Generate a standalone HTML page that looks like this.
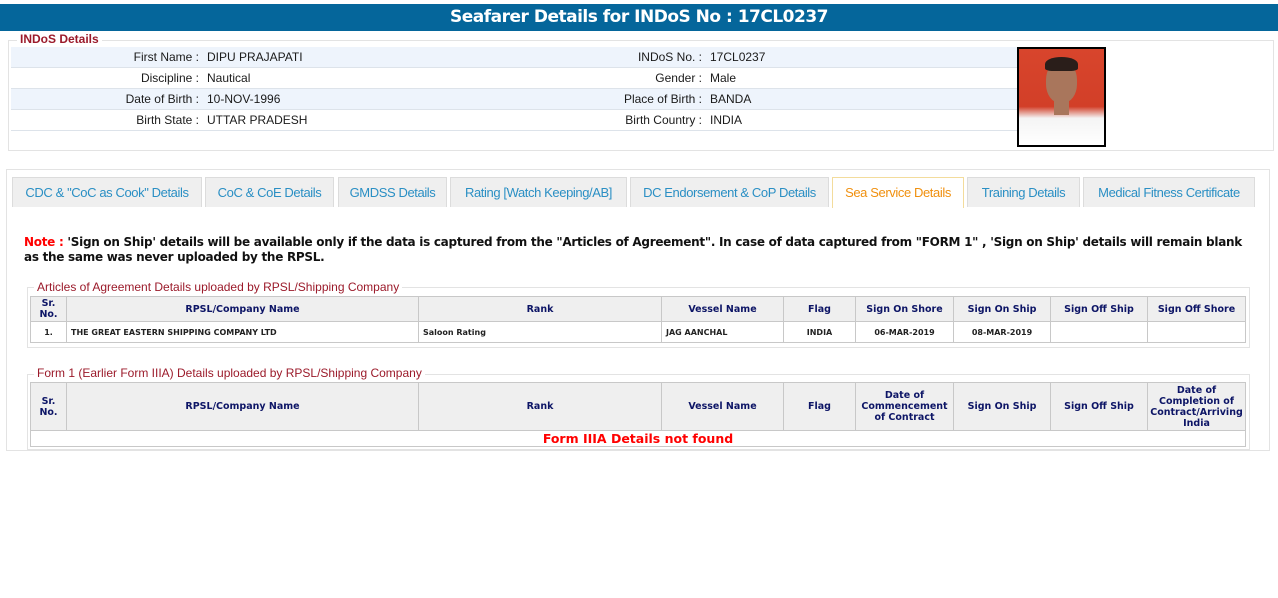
<!DOCTYPE html>
<html><head><meta charset="utf-8"><style>
*{box-sizing:border-box;margin:0;padding:0}
body{width:1278px;height:598px;background:#fff;font-family:"Liberation Sans",Arial,sans-serif;position:relative;overflow:hidden}
.abs{position:absolute}
.hdr{left:0;top:4px;width:1278px;height:27px;background:#05669b;color:#fff;font:bold 17px "DejaVu Sans",Verdana,sans-serif;letter-spacing:-0.5px;text-align:center;line-height:27px}
.fs{border:1px solid #e3e3e3}
.leg{background:#fff;color:#9b1a2a;font-size:12px;padding:0 3px;line-height:13px}
.row{left:11px;width:1006px;height:21px;border-bottom:1px solid #dde3ea;font-size:12px;line-height:20px;color:#1a1a1a}
.row.s{background:#eef4fc}
.row span{position:absolute}
.l1{right:818px;text-align:right}
.v1{left:196px}
.l2{right:315px;text-align:right}
.v2{left:699px}
.tab{top:177px;height:30px;background:#efefef;border:1px solid #dcdcdc;border-bottom:none;color:#2a8fc4;font-size:13px;letter-spacing:-0.4px;text-align:center;line-height:30px}
.tab.a{background:#fff;border-color:#f3dc9c;color:#f0900f;height:31px}
table{border-collapse:collapse;position:absolute;font-family:"DejaVu Sans",Verdana,sans-serif}
td,th{border:1px solid #c8c8c8;text-align:center}
th{background:#efefef;color:#0d1566;font-size:9.5px;font-weight:bold;line-height:11px}
td{font-size:8px;font-weight:bold;color:#222}
</style></head><body>
<div class="abs hdr">Seafarer Details for INDoS No : 17CL0237</div>
<div class="abs fs" style="left:8px;top:40px;width:1266px;height:111px"></div>
<div class="abs leg" style="left:17px;top:33px;font-weight:bold;font-size:12px">INDoS Details</div>
<div class="abs row s" style="top:47px"><span class="l1">First Name :</span><span class="v1">DIPU PRAJAPATI</span><span class="l2">INDoS No. :</span><span class="v2">17CL0237</span></div>
<div class="abs row" style="top:68px"><span class="l1">Discipline :</span><span class="v1">Nautical</span><span class="l2">Gender :</span><span class="v2">Male</span></div>
<div class="abs row s" style="top:89px"><span class="l1">Date of Birth :</span><span class="v1">10-NOV-1996</span><span class="l2">Place of Birth :</span><span class="v2">BANDA</span></div>
<div class="abs row" style="top:110px"><span class="l1">Birth State :</span><span class="v1">UTTAR PRADESH</span><span class="l2">Birth Country :</span><span class="v2">INDIA</span></div>
<div class="abs" style="left:1017px;top:47px;width:89px;height:100px;border:2px solid #000;background:linear-gradient(#d8452c 0%,#d23f28 60%,#f4f4f4 72%,#fff 100%);overflow:hidden">
<div class="abs" style="left:27px;top:12px;width:31px;height:42px;border-radius:45%;background:#a9765c"></div>
<div class="abs" style="left:26px;top:8px;width:33px;height:14px;border-radius:50% 50% 20% 20%;background:#2a1e1a"></div>
<div class="abs" style="left:35px;top:52px;width:15px;height:14px;background:#a9765c"></div>
</div>
<div class="abs fs" style="left:6px;top:169px;width:1264px;height:282px"></div>
<div class="abs tab" style="left:12px;width:190px">CDC &amp; "CoC as Cook" Details</div>
<div class="abs tab" style="left:205px;width:129px">CoC &amp; CoE Details</div>
<div class="abs tab" style="left:338px;width:109px">GMDSS Details</div>
<div class="abs tab" style="left:450px;width:177px">Rating [Watch Keeping/AB]</div>
<div class="abs tab" style="left:630px;width:199px">DC Endorsement &amp; CoP Details</div>
<div class="abs tab a" style="left:832px;width:132px">Sea Service Details</div>
<div class="abs tab" style="left:967px;width:113px">Training Details</div>
<div class="abs tab" style="left:1083px;width:172px">Medical Fitness Certificate</div>
<div class="abs" style="left:24px;top:235px;width:1250px;font:bold 12px/15px 'DejaVu Sans',Verdana,sans-serif;letter-spacing:-0.28px;color:#111;white-space:nowrap"><span style="color:#f00">Note :</span> 'Sign on Ship' details will be available only if the data is captured from the "Articles of Agreement". In case of data captured from "FORM 1" , 'Sign on Ship' details will remain blank<br>as the same was never uploaded by the RPSL.</div>
<div class="abs fs" style="left:27px;top:287px;width:1223px;height:61px"></div>
<div class="abs leg" style="left:34px;top:281px">Articles of Agreement Details uploaded by RPSL/Shipping Company</div>
<table style="left:30px;top:296px;width:1216px">
<tr style="height:25px"><th style="width:36px">Sr.<br>No.</th><th style="width:352px">RPSL/Company Name</th><th style="width:243px">Rank</th><th style="width:122px">Vessel Name</th><th style="width:72px">Flag</th><th style="width:98px">Sign On Shore</th><th style="width:97px">Sign On Ship</th><th style="width:97px">Sign Off Ship</th><th>Sign Off Shore</th></tr>
<tr style="height:21px"><td>1.</td><td style="text-align:left;padding-left:4px">THE GREAT EASTERN SHIPPING COMPANY LTD</td><td style="text-align:left;padding-left:4px">Saloon Rating</td><td style="text-align:left;padding-left:4px">JAG AANCHAL</td><td>INDIA</td><td>06-MAR-2019</td><td>08-MAR-2019</td><td></td><td></td></tr>
</table>
<div class="abs fs" style="left:27px;top:374px;width:1223px;height:76px"></div>
<div class="abs leg" style="left:34px;top:367px">Form 1 (Earlier Form IIIA) Details uploaded by RPSL/Shipping Company</div>
<table style="left:30px;top:382px;width:1216px">
<tr style="height:48px"><th style="width:36px">Sr.<br>No.</th><th style="width:352px">RPSL/Company Name</th><th style="width:243px">Rank</th><th style="width:122px">Vessel Name</th><th style="width:72px">Flag</th><th style="width:98px">Date of Commencement of Contract</th><th style="width:97px">Sign On Ship</th><th style="width:97px">Sign Off Ship</th><th>Date of Completion of Contract/Arriving India</th></tr>
<tr style="height:16px"><td colspan="9" style="color:#f00;font-size:12.5px;line-height:14px;font-family:'DejaVu Sans',Verdana,sans-serif">Form IIIA Details not found</td></tr>
</table>
</body></html>
